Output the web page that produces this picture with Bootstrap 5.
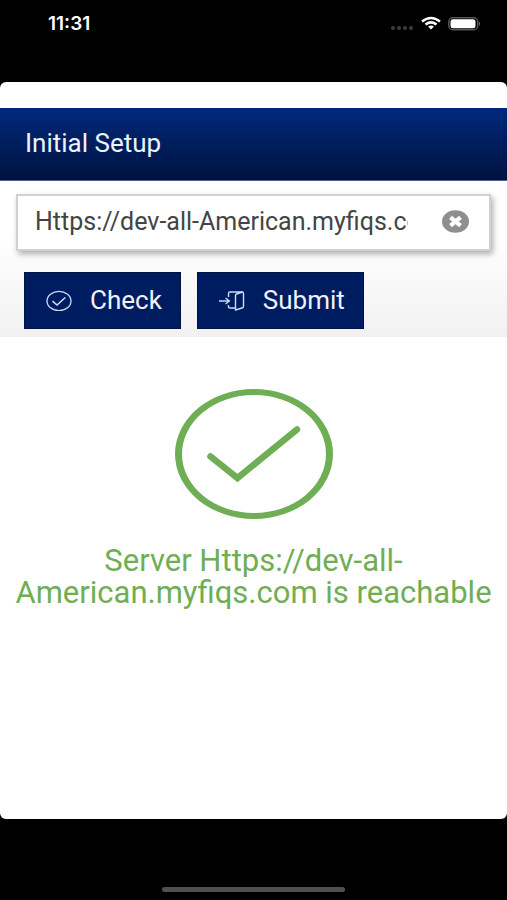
<!DOCTYPE html>
<html lang="en">
<head>
<meta charset="utf-8">
<meta name="viewport" content="width=device-width, initial-scale=1">
<title>Initial Setup</title>
<link rel="stylesheet" href="https://cdn.jsdelivr.net/npm/bootstrap@5.3.0/dist/css/bootstrap.min.css">
<style>
body { font-family: Roboto, "Liberation Sans", sans-serif; background: #000; }
.status { height: 82px; padding: 12px 26px 0 48px; color: #fff; }
.clock { font: 600 19px/24px Inter, Roboto, sans-serif; }
.status-icons { height: 22px; }
.screen { border-radius: 6px; padding-top: 26px; }
.title-bar { background: linear-gradient(#00297c, #00133f); min-height: 73px; padding: 0 25px 2px; border-bottom: 1px solid #4a5f8c; }
.title-bar h1 { font-size: 26px; line-height: 32px; color: #eef2fb; font-weight: 400; }
.setup-form { background: linear-gradient(#fff 35%, #f1f1f1); padding: 13px 16px 8px; }
.url-box { background: #fff; border: 2px solid #d0d0d0; height: 57px; padding: 0 20px 2px 17px; box-shadow: 2px 3px 6px rgba(0,0,0,.32); }
.url-box input { font-size: 25px; line-height: 32px; color: #444; min-width: 0; margin-right: 34px; }
.url-box input:focus { outline: 0; }
.actions { padding: 21px 8px 0; gap: 16px; }
.action { background: #001c60; border: 1px solid #00123f; border-radius: 0; color: #eef2fb; font-size: 26px; line-height: 32px; height: 57px; padding: 0 18px 2px 21px; gap: 18px; }
.action:hover { background: #00267c; color: #fff; }
.result { color: #6fae54; padding: 51px 8px 0; }
.result p { font-size: 31px; line-height: 32px; margin-top: 25px; }
.bottom { height: 81px; padding-bottom: 8px; }
.home-bar { width: 36%; height: 5px; border-radius: 3px; background: #505050; }
</style>
<script defer src="https://cdn.jsdelivr.net/npm/bootstrap@5.3.0/dist/js/bootstrap.bundle.min.js"></script>
</head>
<body class="d-flex flex-column min-vh-100">
<header class="status d-flex justify-content-between align-items-start">
  <time class="clock">11:31</time>
  <div class="status-icons d-flex align-items-center">
    <svg width="90" height="22" viewBox="0 0 90 22" aria-label="Wi-Fi connected, battery full" role="img">
      <g fill="#3c3c3c"><circle cx="2" cy="16" r="2"/><circle cx="8" cy="16" r="2"/><circle cx="14" cy="16" r="2"/><circle cx="20" cy="16" r="2"/></g>
      <g fill="none" stroke="#fff" stroke-width="2.5"><path d="M31 9.5Q40 2.500 49 9.500"/><path d="M34.500 12.500Q40 8.200 45.500 12.500"/></g>
      <path d="M37 14.500Q40 12.500 43 14.500L40 17.500Z" fill="#fff"/>
      <rect x="57.750" y="5.750" width="29" height="12" rx="4" fill="none" stroke="#555" stroke-width="1.500"/>
      <rect x="59.500" y="7.300" width="25" height="9" rx="2.500" fill="#fff"/>
      <path d="M88 9.500Q90 11.700 88 14Z" fill="#777"/>
    </svg>
  </div>
</header>

<main class="screen bg-white flex-grow-1">
  <div class="title-bar d-flex align-items-center"><h1 class="m-0">Initial Setup</h1></div>

  <form class="setup-form" onsubmit="return false">
    <div class="url-box d-flex align-items-center">
      <label class="visually-hidden" for="server">Server address</label>
      <input id="server" class="flex-grow-1 border-0 bg-transparent p-0" type="text" value="Https://dev-all-American.myfiqs.com" spellcheck="false" autocomplete="off">
      <button type="reset" class="btn p-0 border-0 d-flex" aria-label="Clear">
        <svg width="27" height="23" viewBox="0 0 27 23"><ellipse cx="13.500" cy="11.500" rx="13.500" ry="11.200" fill="#8f8f8f"/><path d="M8.500 7.300L18.500 15.700M18.500 7.300L8.500 15.700" stroke="#fff" stroke-width="4.200"/></svg>
      </button>
    </div>
    <div class="actions d-flex">
      <button type="button" class="action btn d-flex align-items-center">
        <svg width="26" height="22" viewBox="0 0 26 22" fill="none" stroke="#c9def5" stroke-width="1.300"><ellipse cx="13" cy="12" rx="12" ry="9.600"/><path d="M6.500 12.200L11 16L19.300 8.500" stroke-width="1.600"/></svg>
        Check
      </button>
      <button type="submit" class="action btn d-flex align-items-center">
        <svg width="26" height="22" viewBox="0 0 26 22" fill="none" stroke="#c9def5" stroke-width="1.400" stroke-linejoin="round"><path d="M0 12H10M6.500 9L10.500 12L6.500 15"/><path d="M9.500 8V4.500Q9.500 3 11 3H23Q24.500 3 24.500 4.500V17Q24.500 18.800 23 19L16.500 21V6.500Q16.500 5.500 17.500 5L23.500 3M9.500 16V18Q9.500 19 11 19H16.500"/></svg>
        Submit
      </button>
    </div>
  </form>

  <section class="result text-center" role="status">
    <svg width="160" height="132" viewBox="0 0 160 132" fill="none" stroke="#6fae54" aria-hidden="true">
      <path fill="#6fae54" fill-rule="evenodd" stroke="none" d="M1 66a79 65 0 1 0 158 0a79 65 0 1 0-158 0ZM8 66a72 59 0 1 0 144 0a72 59 0 1 0-144 0Z"/>
      <path d="M36.500 68.500L63.500 90L123 41.500" stroke-width="6.500" stroke-linecap="round"/>
    </svg>
    <p class="mb-0">Server Https://dev-all-American.myfiqs.com is reachable</p>
  </section>
</main>

<footer class="bottom d-flex align-items-end justify-content-center"><div class="home-bar"></div></footer>
</body>
</html>
